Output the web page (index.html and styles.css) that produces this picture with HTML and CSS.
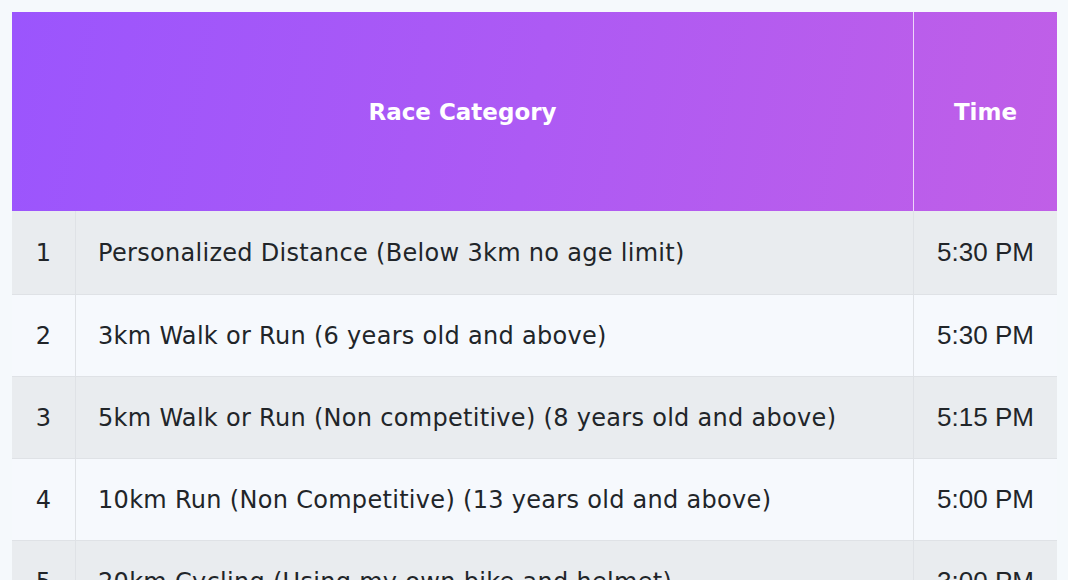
FILE: index.html
```html
<!DOCTYPE html>
<html lang="en">
<head>
<meta charset="utf-8">
<title>Race Categories</title>
<link rel="stylesheet" href="styles.css">
</head>
<body>
<div class="wrap">
<table class="races">
  <thead>
    <tr>
      <th colspan="2" class="h-cat">Race Category</th>
      <th class="h-time">Time</th>
    </tr>
  </thead>
  <tbody>
    <tr><td class="num">1</td><td class="cat">Personalized Distance (Below 3km no age limit)</td><td class="time">5:30 PM</td></tr>
    <tr><td class="num">2</td><td class="cat">3km Walk or Run (6 years old and above)</td><td class="time">5:30 PM</td></tr>
    <tr><td class="num">3</td><td class="cat">5km Walk or Run (Non competitive) (8 years old and above)</td><td class="time">5:15 PM</td></tr>
    <tr><td class="num">4</td><td class="cat">10km Run (Non Competitive) (13 years old and above)</td><td class="time">5:00 PM</td></tr>
    <tr><td class="num">5</td><td class="cat">20km Cycling (Using my own bike and helmet)</td><td class="time">3:00 PM</td></tr>
  </tbody>
</table>
</div>
</body>
</html>
```
FILE: styles.css
```css
html, body {
  margin: 0;
  padding: 0;
  background: #f5f9fc;
}
.wrap {
  padding: 12px 11px 0 12px;
}
.races {
  width: 100%;
  border-collapse: collapse;
  font-family: "DejaVu Sans", sans-serif;
  color: #212529;
}
.races thead tr {
  background: linear-gradient(100deg, #9b55fd 0%, #ad5af4 50%, #c05fe7 100%);
}
.races th {
  height: 199px;
  padding: 0;
  color: #ffffff;
  font-weight: 700;
  font-size: 23px;
  text-align: center;
}
.h-time {
  width: 143px;
  border-left: 1px solid rgba(255, 255, 255, 0.75);
}
.races td {
  height: 81px;
  padding: 0;
  border-top: 1px solid #dfe2e6;
  font-size: 24px;
}
.races tbody tr:first-child td {
  border-top: none;
  height: 83px;
}
.races tbody tr:nth-child(odd) {
  background: #e9ecef;
}
.races tbody tr:nth-child(even) {
  background: #f6f9fd;
}
.num {
  width: 63px;
  text-align: center;
  border-right: 1px solid #dfe2e6;
}
.cat {
  padding-left: 22px !important;
  letter-spacing: 0.3px;
}
.time {
  text-align: center;
  border-left: 1px solid #dfe2e6;
  font-family: "Liberation Sans", Arial, sans-serif;
  font-size: 26px !important;
}
```
